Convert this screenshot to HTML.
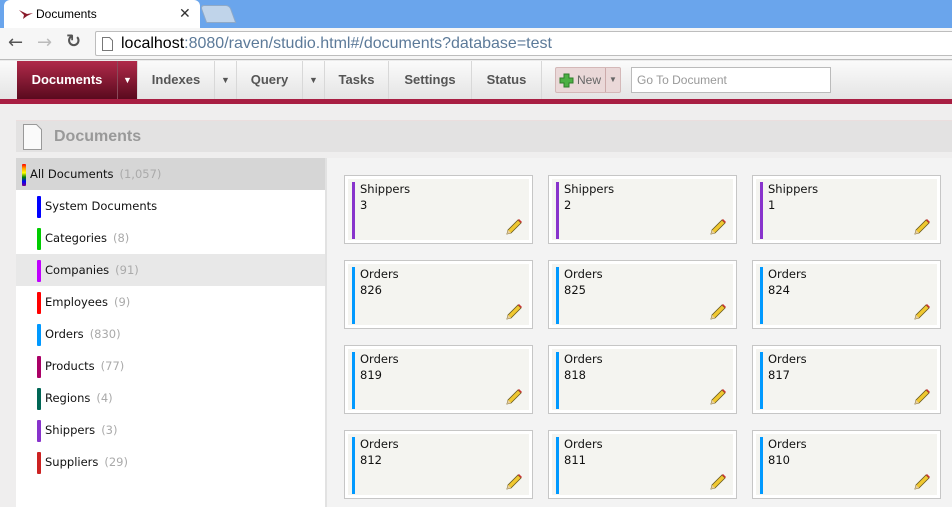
<!DOCTYPE html>
<html><head><meta charset="utf-8"><style>
*{box-sizing:border-box;margin:0;padding:0}
body{width:952px;height:507px;overflow:hidden;font-family:"DejaVu Sans","Liberation Sans",sans-serif;background:#ececec;position:relative}
.abs{position:absolute}
#tabs{left:0;top:0;width:952px;height:28px;background:#6aa5ec}
#tab{left:4px;top:0;width:196px;height:28px;background:#fff;border-radius:6px 6px 0 0;font:12px "Liberation Sans",sans-serif;color:#000}
#tab2{left:203px;top:5px;width:30px;height:18px;background:#c0d4ea;border:1px solid #8fa9c7;border-radius:4px 4px 0 0;transform:skewX(20deg)}
#addr{left:0;top:28px;width:952px;height:32px;background:#f6f6f6;border-bottom:1px solid #bbb}
#url{left:95px;top:3px;width:870px;height:25px;background:#fff;border:1px solid #bdbdbd;border-radius:2px;font:16px "Liberation Sans",sans-serif;padding:3px 0 0 25px;color:#5c7a99}
#nav{left:0;top:61px;width:952px;height:38px;background:linear-gradient(#fbfbfb,#e4e4e4)}
.ni{position:absolute;top:0;height:38px;font:bold 13px "Liberation Sans",sans-serif;color:#555;line-height:38px;text-align:center;border-right:1px solid #d8d8d8}
#red{left:0;top:99px;width:952px;height:5px;background:#a81e42}
#bg{left:0;top:104px;width:952px;height:403px;background:#efeeee}
#hdr{left:16px;top:120px;width:936px;height:32px;background:#e3e2e2;border-top:1px solid #ebdede}
#side{left:16px;top:158px;width:311px;height:349px;background:#fff;border-right:2px solid #e2e2e2}
.si{position:absolute;left:0;width:309px;height:32px;font-size:11.5px;color:#111;line-height:32px;padding-left:29px}
.si i{position:absolute;left:21px;top:6px;width:4px;height:22px;border-radius:1px}
.si span{color:#aaa;margin-left:6px}
#main{left:327px;top:158px;width:625px;height:349px;background:#f3f3f3}
.card{position:absolute;width:189px;height:69px;border:1px solid #c6c6c6;background:#fff;padding:3px}
.card .in{width:100%;height:100%;background:#f4f4f0;position:relative;font-size:11.5px;color:#111;padding:2px 0 0 12px;line-height:16px}
.card .in i{position:absolute;left:4px;top:3px;width:3px;height:57px}
.card svg{position:absolute;right:6px;bottom:4px}
</style></head><body>
<div id="tabs" class="abs"></div>
<div id="tab" class="abs"><svg class="abs" style="left:14px;top:8px" width="16" height="12"><path d="M1 2 L9 6 L15 5 L9 8 L5 11 L6 7 Z" fill="#8a1a2a"/></svg><span class="abs" style="left:32px;top:7px">Documents</span><span class="abs" style="left:175px;top:5px;font-size:14px;color:#333">✕</span></div>
<div id="tab2" class="abs"></div>
<div id="addr" class="abs">
<span class="abs" style="left:8px;top:4px;font-size:18px;color:#555">←</span>
<span class="abs" style="left:37px;top:4px;font-size:18px;color:#bbb">→</span>
<span class="abs" style="left:66px;top:3px;font-size:18px;color:#555;font-weight:bold">↻</span>
<div id="url" class="abs"><svg class="abs" style="left:6px;top:5px" width="11" height="14"><path d="M.5 .5h7l3 3v10h-10z" fill="#fff" stroke="#777"/></svg><span style="color:#000">localhost</span>:8080/raven/studio.html#/documents?database=test</div>
</div>
<div id="nav" class="abs">
<div class="ni" style="left:17px;width:100px;background:linear-gradient(#b02a4a,#5a0a1e);color:#fff;border:none">Documents</div>
<div class="ni" style="left:117px;width:21px;background:linear-gradient(#b02a4a,#5a0a1e);color:#fff;border-left:1px solid #8a4a5a;font-size:9px">▼</div>
<div class="ni" style="left:138px;width:77px">Indexes</div>
<div class="ni" style="left:215px;width:22px;font-size:9px">▼</div>
<div class="ni" style="left:237px;width:66px">Query</div>
<div class="ni" style="left:303px;width:22px;font-size:9px">▼</div>
<div class="ni" style="left:325px;width:64px">Tasks</div>
<div class="ni" style="left:389px;width:83px">Settings</div>
<div class="ni" style="left:472px;width:70px">Status</div>
<div class="abs" style="left:555px;top:6px;width:66px;height:26px;border:1px solid #d4b8b8;background:#ead8d8;border-radius:2px;font:12px 'Liberation Sans',sans-serif;color:#666;line-height:24px;padding-left:21px">New<span style="position:absolute;left:49px;top:0;height:24px;border-left:1px solid #caa;padding-left:3px;font-size:8px">▼</span><svg class="abs" style="left:3px;top:5px" width="15" height="15"><path d="M5 1h5v4h4v5h-4v4H5v-4H1V5h4z" fill="#4cb043" stroke="#2e7d2a"/></svg></div>
<div class="abs" style="left:631px;top:6px;width:200px;height:26px;border:1px solid #bbb;background:#fff;font:12px 'Liberation Sans',sans-serif;color:#999;line-height:24px;padding-left:5px">Go To Document</div>
</div>
<div id="red" class="abs"></div>
<div id="bg" class="abs"></div>
<div id="hdr" class="abs"><svg class="abs" style="left:7px;top:3px" width="20" height="26"><path d="M.5 .5h13l5 5v20H.5z" fill="#fafafa" stroke="#999"/></svg><span class="abs" style="left:38px;top:7px;font:bold 16px 'Liberation Sans',sans-serif;color:#999">Documents</span></div>
<div id="side" class="abs">
<div class="si" style="top:0;background:#d6d6d6;padding-left:14px"><i style="left:6px;background:linear-gradient(red,orange,yellow,green,blue,purple)"></i>All Documents<span>(1,057)</span></div>
<div class="si" style="top:32px"><i style="background:#0000ff"></i>System Documents</div>
<div class="si" style="top:64px"><i style="background:#00cc00"></i>Categories<span>(8)</span></div>
<div class="si" style="top:96px;background:#e8e8e8"><i style="background:#c000ff"></i>Companies<span>(91)</span></div>
<div class="si" style="top:128px"><i style="background:#ff0000"></i>Employees<span>(9)</span></div>
<div class="si" style="top:160px"><i style="background:#0099ff"></i>Orders<span>(830)</span></div>
<div class="si" style="top:192px"><i style="background:#aa0066"></i>Products<span>(77)</span></div>
<div class="si" style="top:224px"><i style="background:#006655"></i>Regions<span>(4)</span></div>
<div class="si" style="top:256px"><i style="background:#8833cc"></i>Shippers<span>(3)</span></div>
<div class="si" style="top:288px"><i style="background:#cc2222"></i>Suppliers<span>(29)</span></div>
</div>
<div id="main" class="abs"></div>
<div id="cards"></div>
<script>
var d=[["Shippers",3,"#8833cc"],["Shippers",2,"#8833cc"],["Shippers",1,"#8833cc"],["Orders",826,"#0099ff"],["Orders",825,"#0099ff"],["Orders",824,"#0099ff"],["Orders",819,"#0099ff"],["Orders",818,"#0099ff"],["Orders",817,"#0099ff"],["Orders",812,"#0099ff"],["Orders",811,"#0099ff"],["Orders",810,"#0099ff"]];
var pen='<svg width="18" height="18" viewBox="0 0 18 18"><path d="M2 16l1-4L13 2l3 3L6 15z" fill="#f0c830" stroke="#6a5a20" stroke-width=".8"/><path d="M13 2l3 3 1-1-3-3z" fill="#c33"/><path d="M2 16l1-4 3 3z" fill="#e8cfa0"/></svg>';
var h='';d.forEach(function(c,i){var x=344+(i%3)*204,y=175+Math.floor(i/3)*85;h+='<div class="card" style="left:'+x+'px;top:'+y+'px"><div class="in"><i style="background:'+c[2]+'"></i>'+c[0]+'<br>'+c[1]+pen+'</div></div>';});
document.getElementById('cards').innerHTML=h;
</script>
</body></html>
